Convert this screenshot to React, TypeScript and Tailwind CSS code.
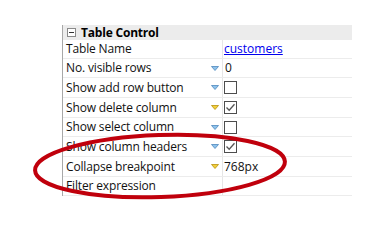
import React from "react";

type Row = {
  label: string;
  h: string;
  arrow?: "blue" | "yellow";
  value?: React.ReactNode;
};

function Arrow({ tone }: { tone: "blue" | "yellow" }) {
  const fill = tone === "blue" ? "#8ec3ec" : "#f2cf3a";
  const stroke = tone === "blue" ? "#4f88bd" : "#b8920e";
  return (
    <svg width="8" height="5" viewBox="0 0 8 5" className="mr-[3px] shrink-0">
      <path d="M0.5 0.5 L7.5 0.5 L4 4.5 Z" fill={fill} stroke={stroke} strokeWidth="0.8" strokeLinejoin="round" />
    </svg>
  );
}

function Check({ on }: { on?: boolean }) {
  return (
    <div className="ml-[1px] flex h-[13px] w-[13px] items-center justify-center border border-[#4d4d4d] bg-white">
      {on && (
        <svg width="11" height="11" viewBox="0 0 11 11">
          <path d="M1.5 5.5 L4.2 8.3 L9.5 2.2" fill="none" stroke="#555" strokeWidth="1.3" />
        </svg>
      )}
    </div>
  );
}

const rows: Row[] = [
  {
    label: "Table Name",
    h: "h-[19px]",
    value: <span className="ml-[1px] text-[#0000ee] underline">customers</span>,
  },
  { label: "No. visible rows", h: "h-[19px]", arrow: "blue", value: <span className="ml-[2px]">0</span> },
  { label: "Show add row button", h: "h-[20px]", arrow: "blue", value: <Check /> },
  { label: "Show delete column", h: "h-[20px]", arrow: "yellow", value: <Check on /> },
  { label: "Show select column", h: "h-[19px]", arrow: "blue", value: <Check /> },
  { label: "Show column headers", h: "h-[20px]", arrow: "blue", value: <Check on /> },
  { label: "Collapse breakpoint", h: "h-[20px]", arrow: "yellow", value: <span className="ml-[1px]">768px</span> },
  { label: "Filter expression", h: "h-[19px]" },
];

export default function App() {
  return (
    <div
      className="relative h-[242px] w-[377px] overflow-hidden bg-white pl-[62px] pt-[25px] text-[12px] text-[#111]"
      style={{ fontFamily: '"Open Sans", "Noto Sans", sans-serif' }}
    >
      <div className="w-[290px] border-l border-[#a8a8a8]">
        {/* category header */}
        <div className="flex h-[15px] items-center bg-[#ececec]">
          <div className="ml-[4px] flex h-[9px] w-[9px] items-center justify-center border border-[#8a8a8a] bg-white">
            <div className="h-[1px] w-[5px] bg-[#333]" />
          </div>
          <span className="ml-[5px] text-[12px] font-bold leading-none tracking-[-0.2px] text-black">Table Control</span>
        </div>

        {rows.map((r) => (
          <div key={r.label} className={`flex ${r.h} border-b border-[#ececec]`}>
            <div className="flex w-[159px] items-center justify-between pl-[3px]">
              <span className="leading-none tracking-[-0.15px]">{r.label}</span>
              {r.arrow && <Arrow tone={r.arrow} />}
            </div>
            <div className="flex flex-1 items-center border-l border-[#e6e6e6] leading-none">{r.value}</div>
          </div>
        ))}
      </div>

      {/* red annotation ellipse */}
      <svg className="pointer-events-none absolute left-0 top-0" width="377" height="242" viewBox="0 0 377 242">
        <ellipse
          cx="160"
          cy="166"
          rx="125"
          ry="31"
          transform="rotate(-2 160 166)"
          fill="none"
          stroke="#c0000c"
          strokeWidth="4"
        />
      </svg>
    </div>
  );
}
